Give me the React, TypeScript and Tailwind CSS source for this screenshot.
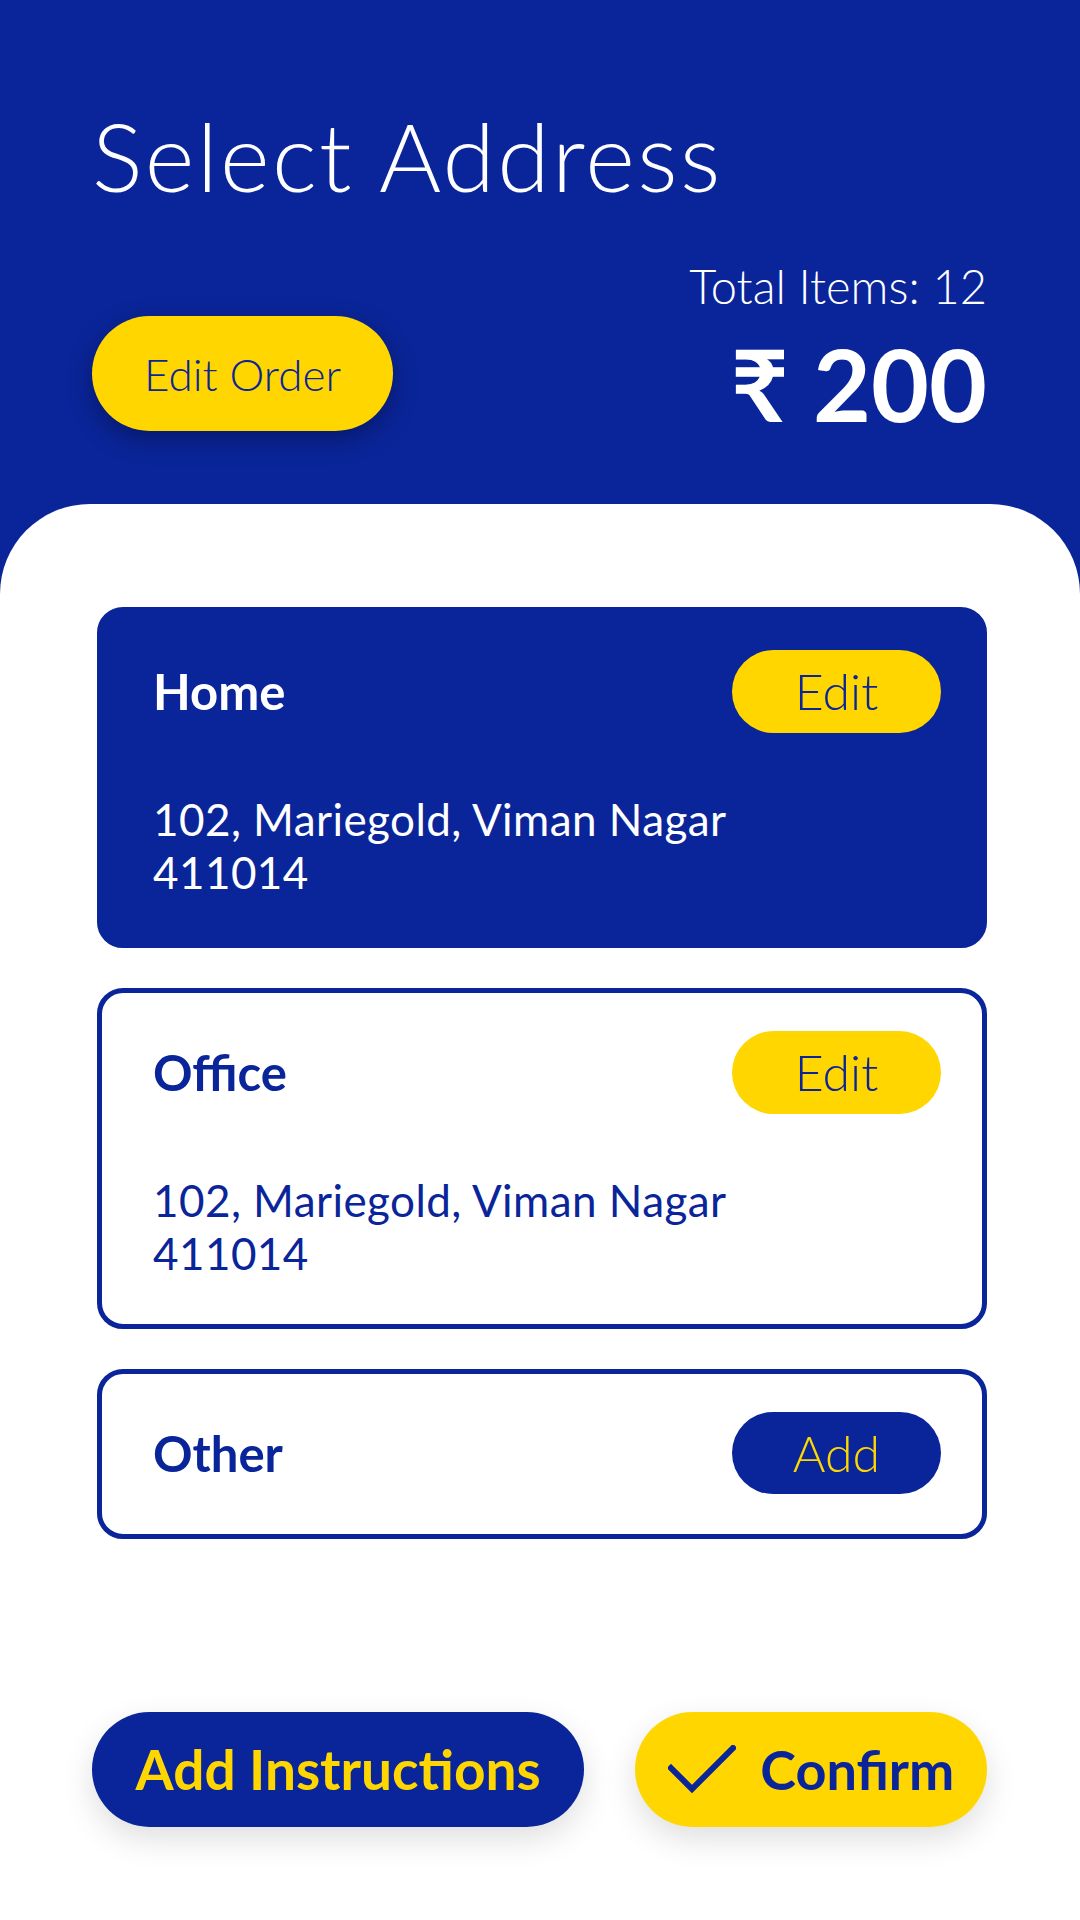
const BLUE = "#0a2599";

type Addr = {
  label: string;
  lines?: string[];
  selected?: boolean;
  action: "Edit" | "Add";
};

const addresses: Addr[] = [
  { label: "Home", lines: ["102, Mariegold, Viman Nagar", "411014"], selected: true, action: "Edit" },
  { label: "Office", lines: ["102, Mariegold, Viman Nagar", "411014"], action: "Edit" },
  { label: "Other", action: "Add" },
];

const Check = () => (
  <svg width="68" height="50" viewBox="0 0 68 50" fill="none">
    <polyline points="3,23 24,44 65,3" stroke={BLUE} strokeWidth="6" strokeLinecap="square" />
  </svg>
);

const AddressCard = ({ a }: { a: Addr }) => {
  const bg = a.selected ? "bg-[#0a2599] text-white" : "bg-white text-[#0a2599]";
  return (
    <div
      className={`rounded-[26px] border-[5px] border-[#0a2599] pt-[38px] pl-[51px] pr-[41px] ${bg} ${
        a.lines ? "pb-[44px]" : "pb-[40px]"
      }`}
    >
      {/* title row */}
      <div className="flex items-center justify-between">
        <div className="text-[49px] font-bold leading-none">{a.label}</div>
        {a.action === "Edit" ? (
          <div className="flex h-[83px] w-[209px] items-center justify-center rounded-full bg-[#ffd600] text-[50px] font-light text-[#0a2599]">
            Edit
          </div>
        ) : (
          <div className="flex h-[82px] w-[209px] items-center justify-center rounded-full bg-[#0a2599] text-[50px] font-light text-[#ffd600]">
            Add
          </div>
        )}
      </div>
      {a.lines && (
        <div className="mt-[60px] text-[44px] leading-[53px] tracking-[0.01em]">
          {a.lines.map((l) => (
            <div key={l}>{l}</div>
          ))}
        </div>
      )}
    </div>
  );
};

export default function App() {
  return (
    <div
      className="flex min-h-screen w-full flex-col bg-[#0a2599]"
      style={{ fontFamily: "Lato, 'Open Sans', sans-serif" }}
    >
      {/* header */}
      <div className="pt-[108px] pb-[71px] pl-[92px] pr-[93px] text-white">
        <div className="text-[95px] font-light leading-none tracking-[0.025em]">Select Address</div>
        <div className="mt-[60px] flex items-start justify-between">
          <div className="mt-[53px] flex h-[115px] w-[301px] items-center justify-center rounded-full bg-[#ffd600] text-[44px] font-light text-[#0a2599] shadow-[0_8px_24px_rgba(0,0,20,0.35)]">
            Edit Order
          </div>
          <div className="flex flex-col items-end">
            <div className="text-[47px] font-light leading-none">Total Items: 12</div>
            <div className="mt-[23px] text-[100px] font-bold leading-none">₹ 200</div>
          </div>
        </div>
      </div>

      {/* white panel */}
      <div className="flex flex-1 flex-col rounded-t-[90px] bg-white pt-[103px] pl-[97px] pr-[93px]">
        <div className="flex flex-col gap-10">
          {addresses.map((a) => (
            <AddressCard key={a.label} a={a} />
          ))}
        </div>

        <div className="mt-[173px] mb-[93px] -ml-[5px] flex gap-[51px]">
          <div className="flex h-[115px] w-[493px] items-center justify-center rounded-full bg-[#0a2599] text-[55px] font-bold text-[#ffd600] shadow-[0_12px_32px_rgba(0,0,0,0.13)]">
            Add Instructions
          </div>
          <div className="flex h-[115px] w-[352px] items-center justify-center gap-[24px] rounded-full bg-[#ffd600] text-[54px] font-bold text-[#0a2599] shadow-[0_12px_32px_rgba(0,0,0,0.13)]">
            <Check />
            <span>Confirm</span>
          </div>
        </div>
      </div>
    </div>
  );
}
